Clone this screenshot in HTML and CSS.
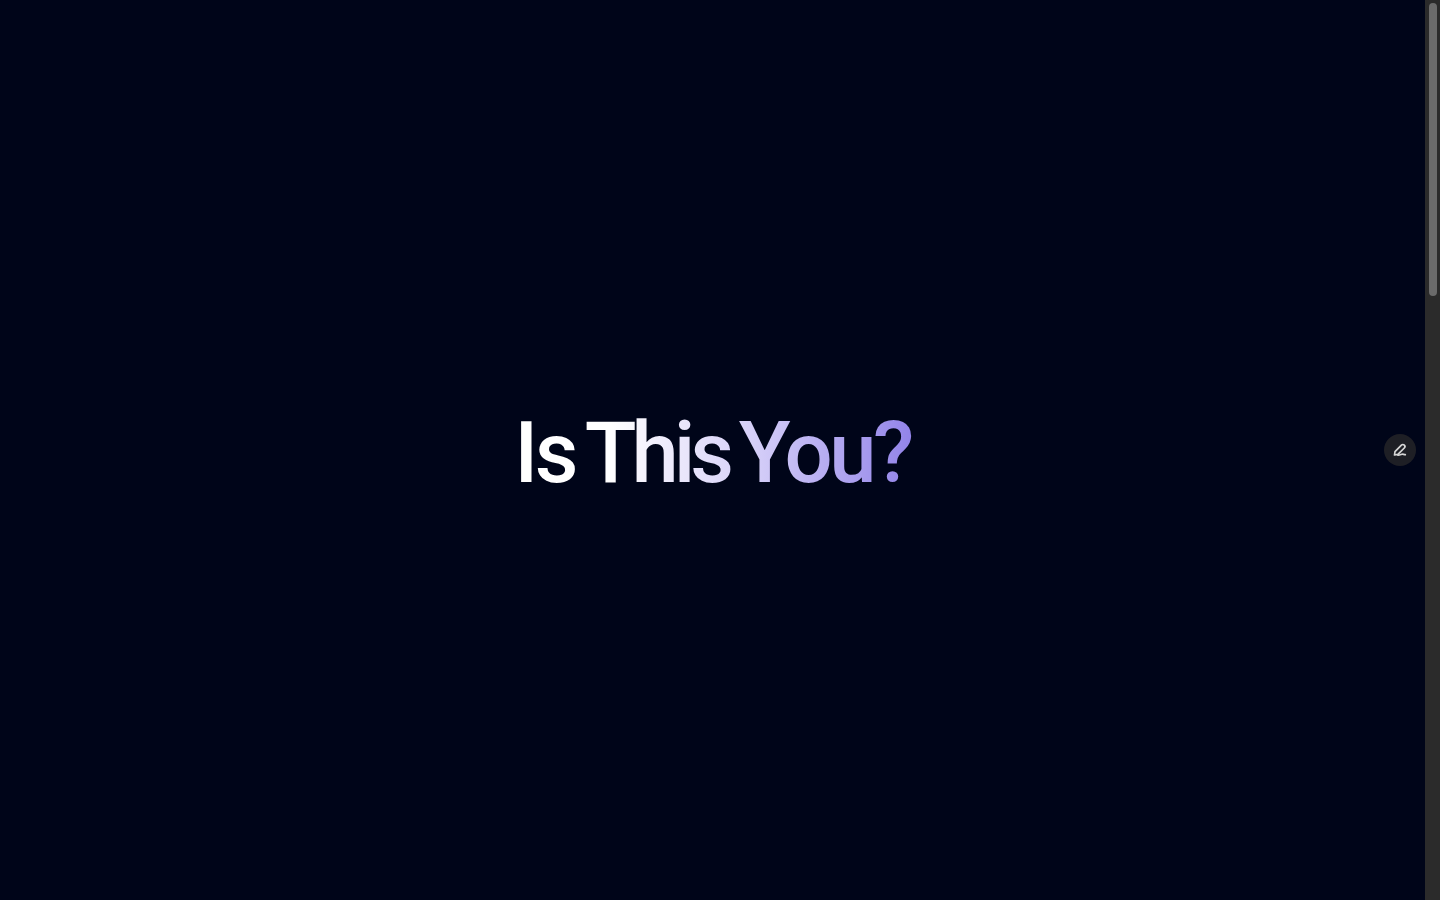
FILE: index.html
```html
<!DOCTYPE html>
<html lang="en">
<head>
<meta charset="utf-8">
<title>Is This You?</title>
<link rel="stylesheet" href="styles.css">
</head>
<body>
<main class="page">
  <section class="hero">
    <h1 class="headline">Is <span class="tight">This</span> You?</h1>
  </section>
</main>
<aside class="rail" aria-hidden="true">
  <div class="thumb"></div>
</aside>
<button class="edit" aria-label="Edit">
  <svg class="edit-icon" viewBox="0 0 16 16" fill="none">
    <path d="M3 9.6 9.4 3.1a2 2 0 0 1 2.9 2.9L5.9 12.4l-3.4.6.5-3.4Z" />
    <path d="M5.9 13.1c2.2.2 3.2-1 4.6-1 1 0 1.4.6 2.8.6" />
  </svg>
</button>
</body>
</html>
```
FILE: styles.css
```css
html, body {
  margin: 0;
  padding: 0;
  height: 100%;
  background: #000519;
}
body {
  display: flex;
  overflow: hidden;
}
.page {
  flex: 1;
  min-width: 0;
}
.hero {
  height: 900px;
  display: flex;
  align-items: center;
  justify-content: center;
}
.headline {
  margin: 0;
  padding: 5px 8px 0;
  font-family: Roboto, Inter, sans-serif;
  font-weight: 500;
  font-size: 85px;
  line-height: 1.2;
  letter-spacing: -3.5px;
  word-spacing: -8px;
  background: linear-gradient(90deg, #ffffff 0%, #ffffff 25%, #d5cff8 60%, #8f80e8 100%);
  -webkit-background-clip: text;
  background-clip: text;
  color: transparent;
}
.tight {
  letter-spacing: -5px;
}
.rail {
  flex: none;
  width: 15px;
  box-sizing: border-box;
  padding: 3px 3px 0 4px;
  background: #2b2b2b;
}
.thumb {
  height: 293px;
  border-radius: 4px;
  background: #6b6b6b;
}
.edit {
  position: fixed;
  right: 24px;
  top: 434px;
  width: 32px;
  height: 32px;
  padding: 0;
  border: 0;
  border-radius: 50%;
  background: #1e1f25;
  display: flex;
  align-items: center;
  justify-content: center;
}
.edit-icon {
  width: 16px;
  height: 16px;
  stroke: #d6d6d6;
  stroke-width: 1.7;
  stroke-linecap: round;
  stroke-linejoin: round;
}
```
